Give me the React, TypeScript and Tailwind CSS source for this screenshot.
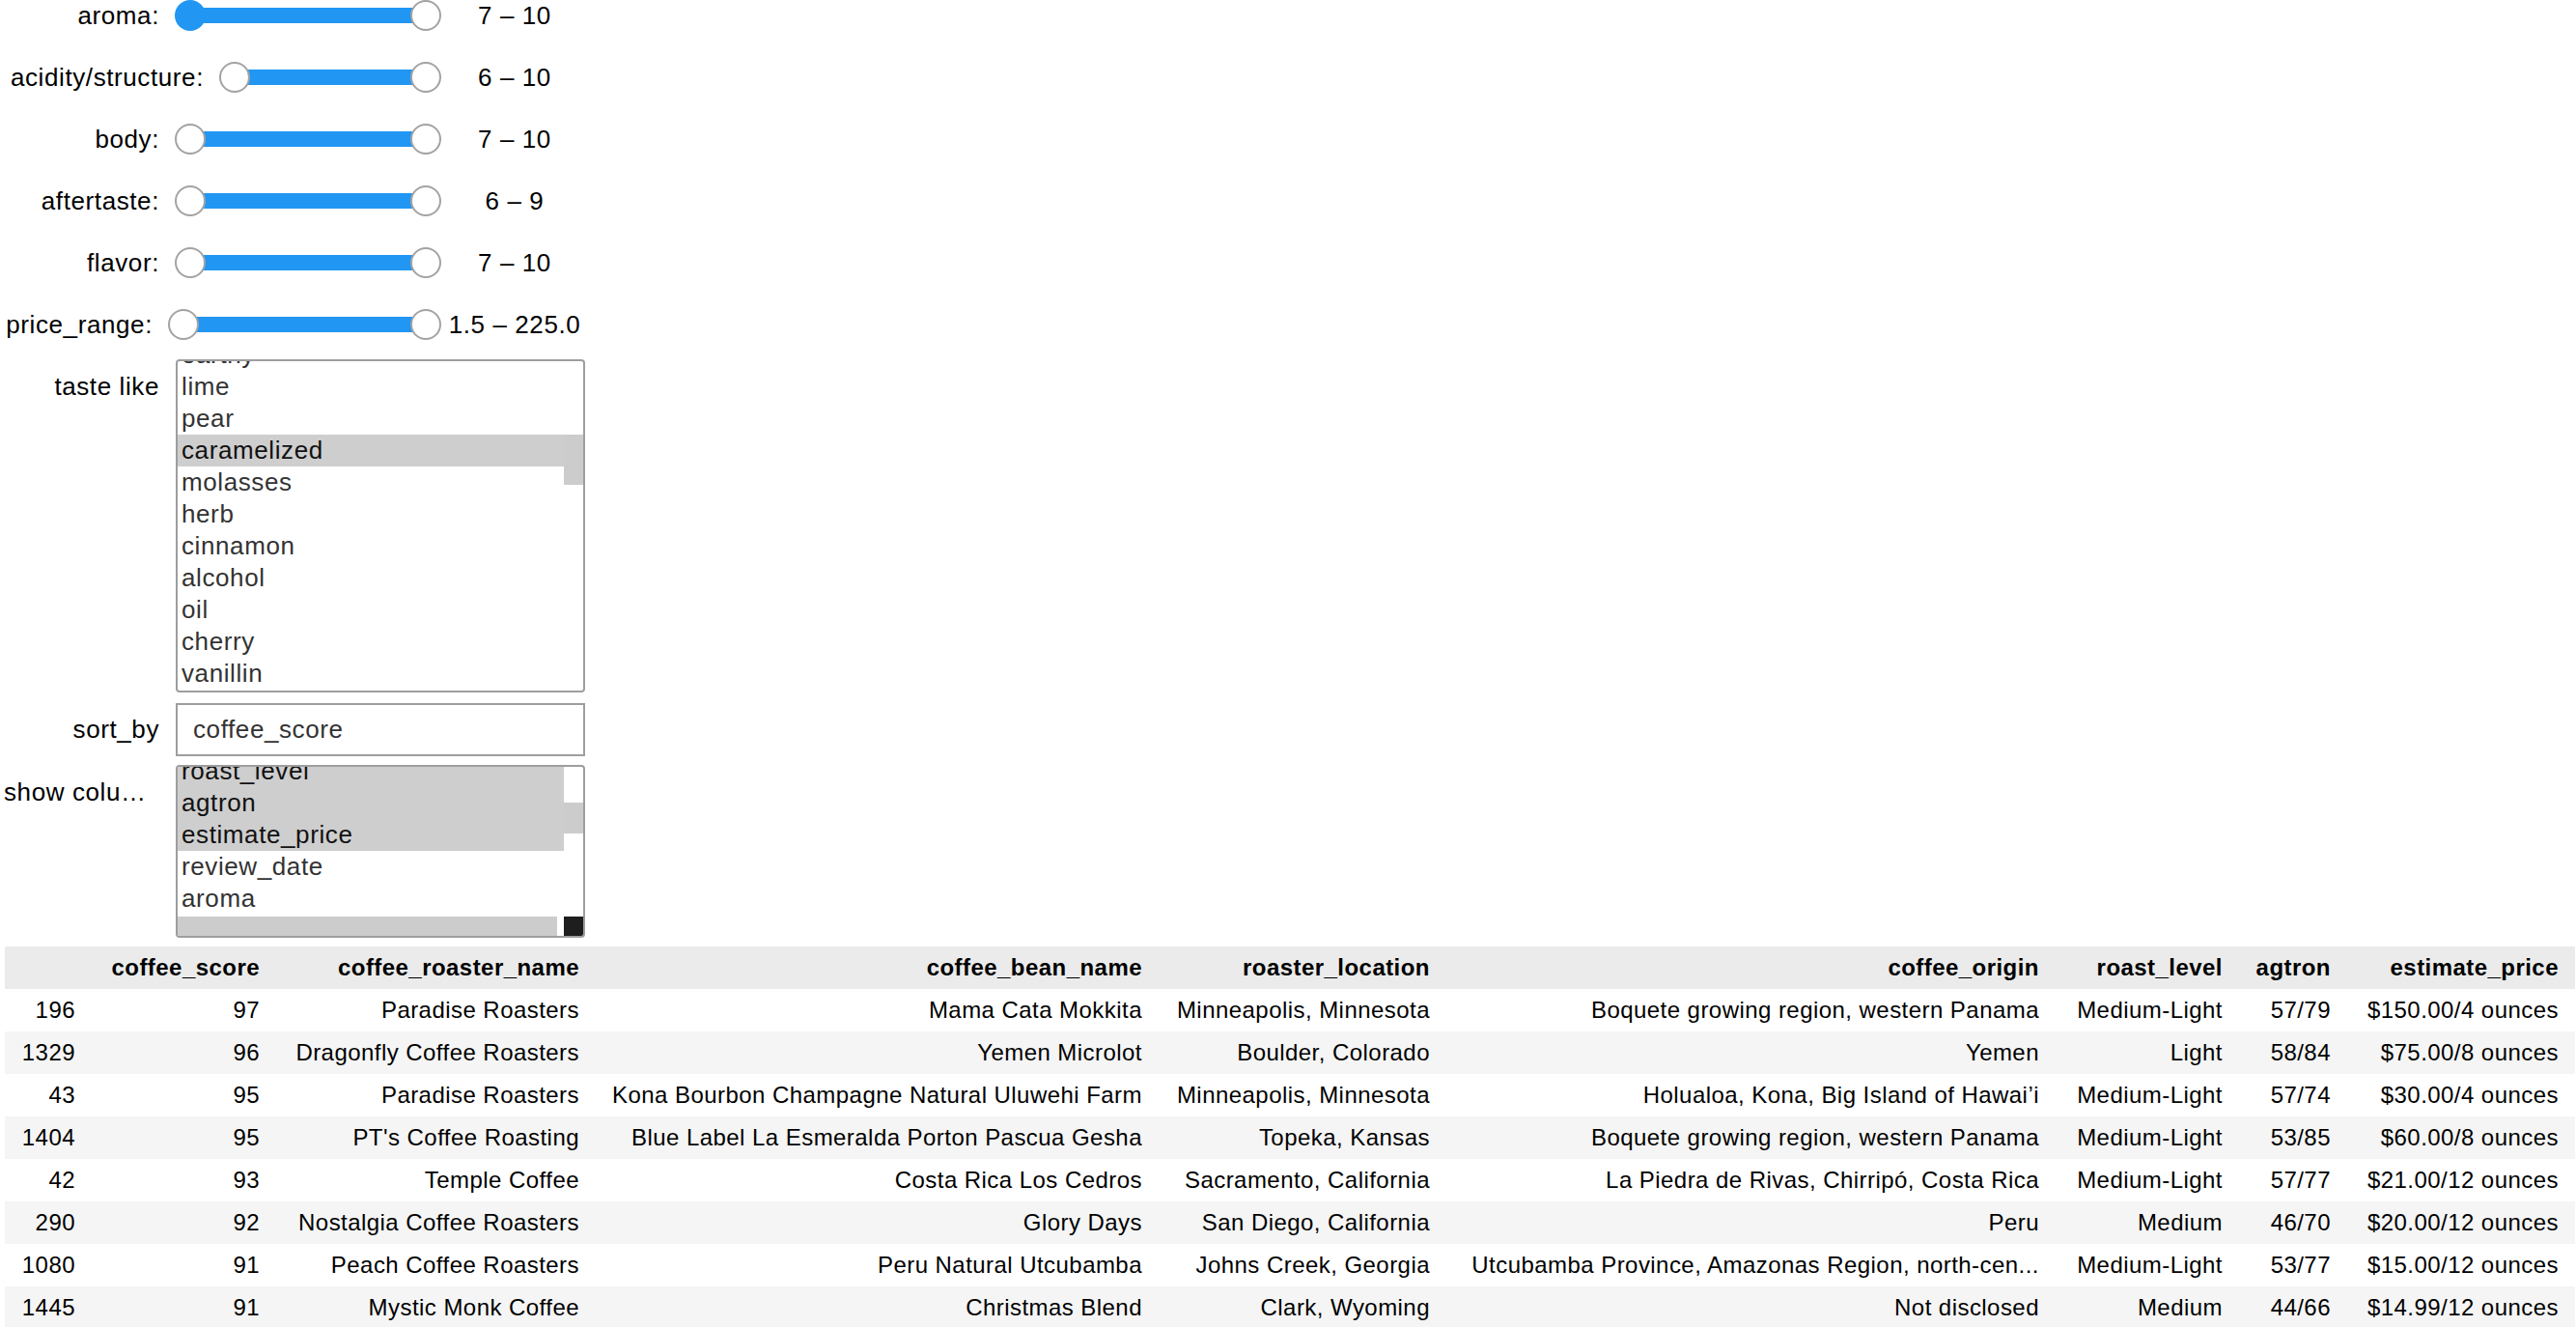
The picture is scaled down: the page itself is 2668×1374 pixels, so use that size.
const sliders = [
  { label: 'aroma:', labelWidth: 'w-[161px]', value: '7 – 10', active: true },
  { label: 'acidity/structure:', labelWidth: 'w-[207px]', value: '6 – 10', active: false },
  { label: 'body:', labelWidth: 'w-[161px]', value: '7 – 10', active: false },
  { label: 'aftertaste:', labelWidth: 'w-[161px]', value: '6 – 9', active: false },
  { label: 'flavor:', labelWidth: 'w-[161px]', value: '7 – 10', active: false },
  { label: 'price_range:', labelWidth: 'w-[154px]', value: '1.5 – 225.0', active: false },
];

const tastes = [
  'earthy',
  'lime',
  'pear',
  'caramelized',
  'molasses',
  'herb',
  'cinnamon',
  'alcohol',
  'oil',
  'cherry',
  'vanillin',
  'chocolate',
];

const columnOptions = [
  { name: 'roast_level', selected: true },
  { name: 'agtron', selected: true },
  { name: 'estimate_price', selected: true },
  { name: 'review_date', selected: false },
  { name: 'aroma', selected: false },
  { name: 'acidity/structure', selected: false },
];

const headers = [
  '',
  'coffee_score',
  'coffee_roaster_name',
  'coffee_bean_name',
  'roaster_location',
  'coffee_origin',
  'roast_level',
  'agtron',
  'estimate_price',
];

const colWidths = ['w-[90px]', 'w-[191px]', 'w-[331px]', 'w-[581px]', 'w-[298px]', 'w-[631px]', 'w-[190px]', 'w-[112px]', 'w-[236px]'];

const rows = [
  ['196', '97', 'Paradise Roasters', 'Mama Cata Mokkita', 'Minneapolis, Minnesota', 'Boquete growing region, western Panama', 'Medium-Light', '57/79', '$150.00/4 ounces'],
  ['1329', '96', 'Dragonfly Coffee Roasters', 'Yemen Microlot', 'Boulder, Colorado', 'Yemen', 'Light', '58/84', '$75.00/8 ounces'],
  ['43', '95', 'Paradise Roasters', 'Kona Bourbon Champagne Natural Uluwehi Farm', 'Minneapolis, Minnesota', 'Holualoa, Kona, Big Island of Hawai’i', 'Medium-Light', '57/74', '$30.00/4 ounces'],
  ['1404', '95', "PT's Coffee Roasting", 'Blue Label La Esmeralda Porton Pascua Gesha', 'Topeka, Kansas', 'Boquete growing region, western Panama', 'Medium-Light', '53/85', '$60.00/8 ounces'],
  ['42', '93', 'Temple Coffee', 'Costa Rica Los Cedros', 'Sacramento, California', 'La Piedra de Rivas, Chirripó, Costa Rica', 'Medium-Light', '57/77', '$21.00/12 ounces'],
  ['290', '92', 'Nostalgia Coffee Roasters', 'Glory Days', 'San Diego, California', 'Peru', 'Medium', '46/70', '$20.00/12 ounces'],
  ['1080', '91', 'Peach Coffee Roasters', 'Peru Natural Utcubamba', 'Johns Creek, Georgia', 'Utcubamba Province, Amazonas Region, north-cen...', 'Medium-Light', '53/77', '$15.00/12 ounces'],
  ['1445', '91', 'Mystic Monk Coffee', 'Christmas Blend', 'Clark, Wyoming', 'Not disclosed', 'Medium', '44/66', '$14.99/12 ounces'],
];

function Knob({ active }: { active: boolean }) {
  return active ? (
    <div className="relative z-10 h-[32px] w-[32px] shrink-0 rounded-full bg-[#2196f3]" />
  ) : (
    <div className="relative z-10 h-[32px] w-[32px] shrink-0 rounded-full border-2 border-[#a3a3a3] bg-white" />
  );
}

function RangeRow({ label, labelWidth, value, active }: (typeof sliders)[number]) {
  return (
    <div className="flex h-[64px] w-[606px] items-center">
      <div className={`ml-[4px] ${labelWidth} shrink-0 text-right text-black`}>{label}</div>
      <div className="ml-[16px] flex flex-1 items-center">
        <Knob active={active} />
        <div className="-mx-[16px] h-[16px] flex-1 bg-[#2196f3]" />
        <Knob active={false} />
      </div>
      <div className="ml-[3px] w-[146px] shrink-0 text-center text-black">{value}</div>
    </div>
  );
}

export default function App() {
  return (
    <div className="min-h-screen overflow-hidden bg-white font-['Liberation_Sans',Arial,sans-serif] text-[26px] tracking-[0.6px]">
      {/* range sliders */}
      <div className="-mt-[16px] flex flex-col">
        {sliders.map((s) => (
          <RangeRow key={s.label} {...s} />
        ))}
      </div>

      {/* taste like */}
      <div className="mt-[4px] flex items-start">
        <div className="ml-[4px] h-[56px] w-[161px] shrink-0 text-right leading-[56px] text-black">taste like</div>
        <div className="ml-[17px] flex h-[345px] w-[424px] overflow-hidden rounded-[4px] border-2 border-[#9e9e9e] bg-white">
          <div className="-mt-[23px] flex-1">
            {tastes.map((t) => (
              <div
                key={t}
                className={`h-[33px] pl-[4px] leading-[33px] ${t === 'caramelized' ? 'bg-[#cecece] text-[#111]' : 'text-[#333]'}`}
              >
                {t}
              </div>
            ))}
          </div>
          <div className="w-[20px] shrink-0 pt-[76px]">
            <div className="h-[52px] bg-[#cccccc]" />
          </div>
        </div>
      </div>

      {/* sort by */}
      <div className="mt-[10px] flex items-center">
        <div className="ml-[4px] h-[56px] w-[161px] shrink-0 text-right leading-[56px] text-black">sort_by</div>
        <div className="ml-[17px] flex h-[55px] w-[424px] items-center border-2 border-[#9e9e9e] pl-[16px] text-[#333]">
          coffee_score
        </div>
      </div>

      {/* show columns */}
      <div className="mt-[9px] flex items-start">
        <div className="ml-[4px] h-[56px] w-[161px] shrink-0 overflow-hidden text-right leading-[56px] text-ellipsis whitespace-nowrap text-black">
          show columns:
        </div>
        <div className="ml-[17px] flex h-[179px] w-[424px] flex-col overflow-hidden rounded-[4px] border-2 border-[#9e9e9e] bg-white">
          <div className="flex min-h-0 flex-1 overflow-hidden">
            <div className="-mt-[12px] flex-1">
              {columnOptions.map((c) => (
                <div
                  key={c.name}
                  className={`h-[33px] pl-[4px] leading-[33px] ${c.selected ? 'bg-[#cecece] text-[#111]' : 'text-[#333]'}`}
                >
                  {c.name}
                </div>
              ))}
            </div>
            <div className="w-[20px] shrink-0 pt-[37px]">
              <div className="h-[32px] bg-[#cccccc]" />
            </div>
          </div>
          <div className="flex h-[20px] shrink-0">
            <div className="w-[393px] bg-[#cccccc]" />
            <div className="flex-1" />
            <div className="w-[20px] bg-[#1e1e1e]" />
          </div>
        </div>
      </div>

      {/* dataframe */}
      <table className="mt-[9px] ml-[5px] table-fixed border-collapse text-[24px] tracking-[0.45px] text-black">
        <colgroup>
          {colWidths.map((w, i) => (
            <col key={i} className={w} />
          ))}
        </colgroup>
        <thead>
          <tr className="h-[44px] bg-[#ebebeb]">
            {headers.map((h, i) => (
              <th key={i} className="px-[17px] text-right font-bold whitespace-nowrap">
                {h}
              </th>
            ))}
          </tr>
        </thead>
        <tbody>
          {rows.map((r, ri) => (
            <tr key={ri} className={`h-[44px] ${ri % 2 === 1 ? 'bg-[#f5f5f5]' : 'bg-white'}`}>
              {r.map((cell, ci) => (
                <td key={ci} className="px-[17px] text-right whitespace-nowrap">
                  {cell}
                </td>
              ))}
            </tr>
          ))}
        </tbody>
      </table>
    </div>
  );
}
